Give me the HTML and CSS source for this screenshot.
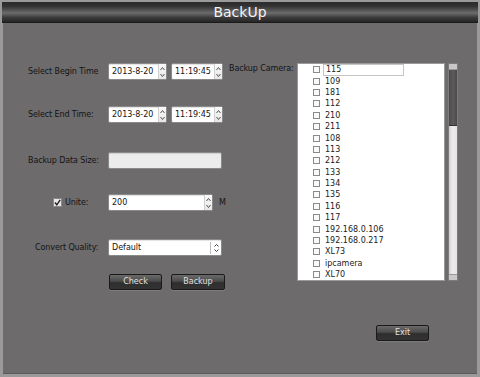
FILE: index.html
```html
<!DOCTYPE html>
<html>
<head>
<meta charset="utf-8">
<link rel="stylesheet" href="styles.css">
</head>
<body>
<div class="window">
  <div class="titlebar">BackUp</div>
  <div class="panel">
    <div class="form">
      <div class="row r1">
        <div class="label l-begin">Select Begin Time</div>
        <div class="field date"><span class="val">2013-8-20</span><span class="spin"><svg width="7" height="14" viewBox="0 0 7 14"><path d="M1.5 5 L3.5 2.5 L5.5 5" fill="none" stroke="#555" stroke-width="1"/><path d="M1.5 9 L3.5 11.5 L5.5 9" fill="none" stroke="#555" stroke-width="1"/></svg></span></div>
        <div class="field time"><span class="val">11:19:45</span><span class="spin"><svg width="7" height="14" viewBox="0 0 7 14"><path d="M1.5 5 L3.5 2.5 L5.5 5" fill="none" stroke="#555" stroke-width="1"/><path d="M1.5 9 L3.5 11.5 L5.5 9" fill="none" stroke="#555" stroke-width="1"/></svg></span></div>
      </div>
      <div class="row r2">
        <div class="label l-end">Select End Time:</div>
        <div class="field date"><span class="val">2013-8-20</span><span class="spin"><svg width="7" height="14" viewBox="0 0 7 14"><path d="M1.5 5 L3.5 2.5 L5.5 5" fill="none" stroke="#555" stroke-width="1"/><path d="M1.5 9 L3.5 11.5 L5.5 9" fill="none" stroke="#555" stroke-width="1"/></svg></span></div>
        <div class="field time"><span class="val">11:19:45</span><span class="spin"><svg width="7" height="14" viewBox="0 0 7 14"><path d="M1.5 5 L3.5 2.5 L5.5 5" fill="none" stroke="#555" stroke-width="1"/><path d="M1.5 9 L3.5 11.5 L5.5 9" fill="none" stroke="#555" stroke-width="1"/></svg></span></div>
      </div>
      <div class="row r3">
        <div class="label l-size">Backup Data Size:</div>
        <div class="field wide disabled"></div>
      </div>
      <div class="row r4">
        <div class="label l-unite"><span class="check"><svg width="9" height="9" viewBox="0 0 9 9"><path d="M2 4.5 L3.8 6.8 L7.2 1.8" fill="none" stroke="#222" stroke-width="1.4"/></svg></span>Unite:</div>
        <div class="field wide"><span class="val">200</span><span class="spin"><svg width="7" height="14" viewBox="0 0 7 14"><path d="M1.5 5 L3.5 2.5 L5.5 5" fill="none" stroke="#555" stroke-width="1"/><path d="M1.5 9 L3.5 11.5 L5.5 9" fill="none" stroke="#555" stroke-width="1"/></svg></span></div>
        <div class="unit">M</div>
      </div>
      <div class="row r5">
        <div class="label l-quality">Convert Quality:</div>
        <div class="field wide combo"><span class="val">Default</span><span class="combo-arrow"><svg width="7" height="12" viewBox="0 0 7 12"><path d="M1.5 4.5 L3.5 2.5 L5.5 4.5" fill="none" stroke="#444" stroke-width="1"/><path d="M1.5 7.5 L3.5 9.5 L5.5 7.5" fill="none" stroke="#444" stroke-width="1"/></svg></span></div>
      </div>
      <div class="row r6">
        <div class="btn check-btn">Check</div>
        <div class="btn backup-btn">Backup</div>
      </div>
    </div>
    <div class="cam-label">Backup Camera:</div>
    <div class="right">
      <div class="listwrap">
        <div class="listbox">
          <div class="item editing"><span class="cb"></span><span class="edit">115</span></div>
          <div class="item"><span class="cb"></span>109</div>
          <div class="item"><span class="cb"></span>181</div>
          <div class="item"><span class="cb"></span>112</div>
          <div class="item"><span class="cb"></span>210</div>
          <div class="item"><span class="cb"></span>211</div>
          <div class="item"><span class="cb"></span>108</div>
          <div class="item"><span class="cb"></span>113</div>
          <div class="item"><span class="cb"></span>212</div>
          <div class="item"><span class="cb"></span>133</div>
          <div class="item"><span class="cb"></span>134</div>
          <div class="item"><span class="cb"></span>135</div>
          <div class="item"><span class="cb"></span>116</div>
          <div class="item"><span class="cb"></span>117</div>
          <div class="item"><span class="cb"></span>192.168.0.106</div>
          <div class="item"><span class="cb"></span>192.168.0.217</div>
          <div class="item"><span class="cb"></span>XL73</div>
          <div class="item"><span class="cb"></span>ipcamera</div>
          <div class="item"><span class="cb"></span>XL70</div>
        </div>
        <div class="scroll">
          <div class="sb-cap"></div>
          <div class="sb-thumb"></div>
          <div class="sb-track"></div>
          <div class="sb-cap"></div>
        </div>
      </div>
      <div class="exit-row">
        <div class="btn exit-btn">Exit</div>
      </div>
    </div>
  </div>
</div>
</body>
</html>
```
FILE: styles.css
```css
* { box-sizing: border-box; }
html, body { margin: 0; padding: 0; }
body {
  width: 480px;
  height: 377px;
  background: #9a9a9a;
  font-family: "DejaVu Sans", sans-serif;
  font-size: 8px;
  color: #141414;
  overflow: hidden;
}
.window {
  padding: 2px 2px 0 2px;
}
.titlebar {
  height: 21px;
  background: linear-gradient(#2b2b2b 0%, #323232 20%, #5a5a5a 45%, #6c6c6c 55%, #3a3a3a 78%, #262626 100%);
  border-bottom: 1px solid #1a1a1a;
  color: #f4f4f4;
  font-size: 14px;
  line-height: 20px;
  text-align: center;
}
.panel {
  height: 351px;
  margin: 0 1px;
  background: #6d6b6c;
  display: flex;
  align-items: flex-start;
  border-bottom: 1px solid #5c5a5b;
}
.form {
  width: 223px;
  flex: none;
}
.row {
  display: flex;
  align-items: center;
  height: 17px;
}
.r1 { margin-top: 40px; }
.r2 { margin-top: 26px; }
.r3 { margin-top: 29px; }
.r4 { margin-top: 25px; }
.r5 { margin-top: 28px; }
.r6 { margin-top: 18px; height: 16px; padding-left: 106px; }
.label {
  width: 105px;
  flex: none;
  white-space: nowrap;
  display: flex;
  align-items: center;
  letter-spacing: -0.1px;
}
.l-begin, .l-end, .l-size { padding-left: 25px; }
.l-unite { padding-left: 50px; }
.l-quality { padding-left: 32px; }
.check {
  width: 9px;
  height: 9px;
  background: #e8e8e8;
  border: 1px solid #888;
  margin-right: 3px;
  display: inline-flex;
}
.check svg { margin: -1px; }
.field {
  height: 17px;
  background: #fff;
  border: 1px solid #8a8a8a;
  border-radius: 2px;
  display: flex;
  align-items: center;
  justify-content: space-between;
  box-shadow: inset 0 1px 1px rgba(0,0,0,0.12);
}
.val { padding-left: 3px; white-space: nowrap; }
.date { width: 59px; }
.time { width: 52px; margin-left: 4px; }
.wide { width: 114px; }
.disabled { background: #ececec; }
.spin {
  width: 8px;
  height: 15px;
  border-left: 1px solid #cfcfcf;
  background: linear-gradient(#fafafa, #e6e6e6);
  display: flex;
  align-items: center;
  justify-content: center;
}
.combo-arrow {
  width: 11px;
  height: 12px;
  border-left: 1px solid #bbb;
  display: flex;
  align-items: center;
  justify-content: center;
}
.unit { margin-left: 6px; }
.btn {
  height: 16px;
  border: 1px solid #1a1a1a;
  border-radius: 2px;
  background: linear-gradient(#6a6a6a 0%, #4a4a4a 45%, #2e2e2e 55%, #333 100%);
  color: #e0e0e0;
  text-align: center;
  line-height: 14px;
  font-size: 8px;
  box-shadow: 0 1px 0 rgba(255,255,255,0.12);
}
.check-btn { width: 53px; }
.backup-btn { width: 54px; margin-left: 9px; }
.cam-label {
  width: 68px;
  flex: none;
  margin-left: 3px;
  margin-top: 41px;
  white-space: nowrap;
  overflow: hidden;
  letter-spacing: -0.1px;
}
.right {
  flex: none;
  display: flex;
  flex-direction: column;
}
.listwrap {
  margin-top: 40px;
  display: flex;
  height: 218px;
}
.listbox {
  width: 148px;
  height: 218px;
  background: #fff;
  border: 1px solid #9a9a9a;
}
.item {
  height: 11.4px;
  display: flex;
  align-items: center;
  padding-left: 15px;
  line-height: 11px;
  color: #222;
}
.cb {
  width: 7px;
  height: 7px;
  border: 1px solid #8a8a8a;
  background: #fafafa;
  margin-right: 5px;
  flex: none;
}
.edit {
  width: 81px;
  height: 12px;
  border: 1px solid #c4c4c4;
  margin-left: -2px;
  padding-left: 2px;
  line-height: 10px;
}
.scroll {
  width: 10px;
  margin-left: 3px;
  border: 1px solid #7d7d7d;
  display: flex;
  flex-direction: column;
  background: #e4e4e4;
}
.sb-cap {
  height: 6px;
  background: #c8c8c8;
  border-bottom: 1px solid #9a9a9a;
}
.sb-cap:last-child { border-bottom: none; border-top: 1px solid #9a9a9a; }
.sb-thumb {
  height: 56px;
  background: linear-gradient(90deg, #4a4a4a, #5c5c5c 50%, #4a4a4a);
  border-bottom: 1px solid #333;
}
.sb-track {
  flex: 1;
  background: linear-gradient(90deg, #cfcfcf, #ececec 40%, #e6e6e6);
}
.exit-row {
  display: flex;
  margin-top: 44px;
  padding-left: 79px;
}
.exit-btn { width: 53px; }
```
